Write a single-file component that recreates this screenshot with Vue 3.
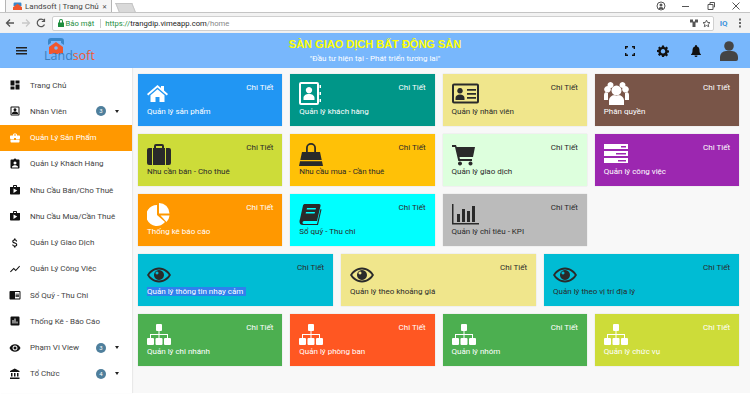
<template>
  <div class="page">
    <div class="tabstrip">
      <div class="tab">
        <svg class="favicon" viewBox="0 0 16 16"><path fill="#3a86c8" d="M3 1h10a2 2 0 0 1 2 2v4H1V3a2 2 0 0 1 2-2z" /><path fill="#f0562c" d="M8 3 0 9.5V14h16V9.5z" /></svg>
        <span class="tab-title">Landsoft | Trang Chủ</span>
        <span class="tab-close">✕</span>
      </div>
      <div class="newtab"></div>
      <div class="win-btns">
        <svg width="10" height="10" viewBox="0 0 10 10"><circle cx="5" cy="5" r="4" fill="none" stroke="#555" /><circle cx="5" cy="4" r="1.5" fill="#555" /><path d="M2.5 8a2.5 2 0 0 1 5 0z" fill="#555" /></svg>
        <svg width="10" height="10" viewBox="0 0 10 10"><path d="M1 5.5h7" stroke="#555" /></svg>
        <svg width="10" height="10" viewBox="0 0 10 10"><path d="M2 3.5h5v5H2zM4 3V1.5h4.500V6H7.500" fill="none" stroke="#555" /></svg>
        <svg width="10" height="10" viewBox="0 0 10 10"><path d="M1.5 1.5l7 7m0-7l-7 7" stroke="#555" /></svg>
      </div>
    </div>

    <div class="toolbar">
      <svg width="10" height="10" viewBox="0 0 10 10"><path d="M9 5H2m3-3.5L1.5 5 5 8.5" fill="none" stroke="#555" stroke-width="1.3" /></svg>
      <svg width="10" height="10" viewBox="0 0 10 10"><path d="M1 5h7M5 1.500 8.500 5 5 8.500" fill="none" stroke="#c8c8c8" stroke-width="1.3" /></svg>
      <svg width="10" height="10" viewBox="0 0 10 10"><path d="M8.500 6.500A3.800 3.800 0 1 1 8 2.500M8.500 .8v2.700H5.800" fill="none" stroke="#555" stroke-width="1.2" /></svg>
      <div class="omnibox">
        <svg class="lock" width="6" height="8" viewBox="0 0 6 8"><path fill="#1e8e3e" d="M0 3.500h6V8H0zM1 3.500V2a2 2 0 0 1 4 0v1.500H4V2a1 1 0 0 0-2 0v1.500z" /></svg>
        <span class="secure">Bảo mật</span>
        <span class="url"><span class="secure">https://</span>trangdip.vimeapp.com<span class="url-path">/home</span></span>
        <svg width="8" height="9" viewBox="0 0 8 9"><path fill="#555" d="M0 .5h3v2h2v-2h3v3H5.500V8h-3V3.500H0z" /></svg>
        <svg width="9" height="9" viewBox="0 0 24 24"><path fill="none" stroke="#555" stroke-width="2.5" d="M12 3l2.800 6 6.500.7-4.800 4.400 1.300 6.400L12 17.300l-5.800 3.200 1.300-6.400-4.800-4.400L9.200 9z" /></svg>
      </div>
      <span class="iq">IQ</span>
      <svg width="4" height="10" viewBox="0 0 4 10"><path fill="#666" d="M1 .5h2v2H1zM1 4h2v2H1zM1 7.500h2v2H1z" /></svg>
    </div>

    <header class="topbar">
      <div class="top-left">
        <svg width="11" height="8" viewBox="0 0 11 8"><path fill="#222" d="M0 0h11v1.500H0zM0 3h11v1.500H0zM0 6h11v1.500H0z" /></svg>
        <div class="logo">
          <svg class="logo-mark" width="16" height="16" viewBox="0 0 16 16">
            <path fill="#3a86c8" d="M3 0h10a3 3 0 0 1 3 3v4l-3-2V3H3v2L0 7V3a3 3 0 0 1 3-3z" />
            <path fill="#f0562c" d="M8 4 15 9v7H1V9z" />
            <circle cx="8" cy="10" r="1.8" fill="#78b7fc" />
          </svg>
          <span class="logo-text"><span class="land">Land</span><span class="soft">soft</span></span>
        </div>
      </div>
      <div class="brand">
        <div class="brand-title">SÀN GIAO DỊCH BẤT ĐỘNG SẢN</div>
        <div class="brand-sub">"Đầu tư hiện tại - Phát triển tương lai"</div>
      </div>
      <div class="top-actions">
        <svg width="10" height="10" viewBox="0 0 10 10"><path fill="none" stroke="#111" stroke-width="1.4" d="M.7 3V.7H3M7 .7h2.300V3M9.300 7v2.300H7M3 9.300H.7V7" /></svg>
        <svg width="12" height="12" viewBox="0 0 24 24"><path fill="#111" fill-rule="evenodd" d="M10 1h4l.6 3.200 1.900.8L19.200 3.200l2.800 2.800-1.800 2.700.8 1.900L24 11v4l-3 .6-.8 1.900 1.800 2.700-2.800 2.800-2.700-1.800-1.900.8L14 24h-4l-.6-3-1.900-.8-2.700 1.800L2 19.200l1.800-2.700-.8-1.900L0 14v-4l3-.6.8-1.900L2 6l2.800-2.800L7.500 5l1.900-.8zM12 8a4.500 4.500 0 1 0 .01 0z" /></svg>
        <svg width="10" height="12" viewBox="0 0 10 12"><path fill="#111" d="M5 0a1 1 0 0 1 1 1v.5C8 2 8.500 3.800 8.500 5.500c0 2 .5 3 1.500 4V10H0v-.5c1-1 1.500-2 1.500-4C1.500 3.800 2 2 4 1.500V1a1 1 0 0 1 1-1zM3.500 10.500h3a1.500 1.500 0 0 1-3 0z" /></svg>
        <svg class="avatar" width="18" height="20" viewBox="0 0 18 20"><circle cx="9" cy="5" r="4.8" fill="#444" /><path fill="#444" d="M0 20v-4a6 6 0 0 1 6-6h6a6 6 0 0 1 6 6v2a2 2 0 0 1-2 2z" /></svg>
      </div>
    </header>

    <div class="body">
      <aside class="sidebar">
        <div v-for="item in menu" :key="item.label" class="menu-item" :class="{ active: item.active }">
          <svg class="menu-icon" width="12" height="12" viewBox="0 0 24 24"><path :d="item.icon" fill-rule="evenodd" /></svg>
          <span class="menu-label">{{ item.label }}</span>
          <span v-if="item.badge" class="badge">{{ item.badge }}</span>
          <span v-if="item.badge" class="caret"></span>
        </div>
      </aside>

      <main class="board">
        <div v-for="card in cards" :key="card.label" class="card" :class="[card.wide ? 'wide' : '', card.dark ? 'dark' : '']" :style="{ background: card.color }">
          <svg class="card-icon" width="28" height="24" viewBox="0 0 28 24">
            <path v-for="d in icons[card.icon]" :key="d" :d="d" fill-rule="evenodd" />
          </svg>
          <span class="more">Chi Tiết</span>
          <span class="card-label"><span :class="{ picked: card.picked }">{{ card.label }}</span></span>
        </div>
      </main>
    </div>
  </div>
</template>

<script setup>
const shop = 'M16 6V4c0-1.100-.9-2-2-2h-4C8.900 2 8 2.900 8 4v2H2v13c0 1.100.9 2 2 2h16c1.100 0 2-.9 2-2V6zM10 4h4v2h-4zM9 18V9l7.500 4z'

const menu = [
  { label: 'Trang Chủ', icon: 'M3 3h8v10H3zM3 15h8v6H3zM13 3h8v6h-8zM13 11h8v10h-8z' },
  { label: 'Nhân Viên', badge: 3, icon: 'M5 3h14a2 2 0 0 1 2 2v14a2 2 0 0 1-2 2H5a2 2 0 0 1-2-2V5a2 2 0 0 1 2-2zM5 5v14h14V5zM12 6.500a3 3 0 1 1-.01 0zM6 18v-1.500c0-2.500 4-3.600 6-3.600s6 1.100 6 3.600V18z' },
  { label: 'Quản Lý Sản Phẩm', active: true, icon: 'M10 16v-1H3v4c0 1.100.9 2 2 2h14c1.100 0 2-.9 2-2v-4h-7v1zM20 7h-4V5l-2-2h-4L8 5v2H4C2.900 7 2 7.900 2 9v3c0 1.100.9 2 2 2h6v-2h4v2h6c1.100 0 2-.9 2-2V9c0-1.100-.9-2-2-2zM14 7h-4V5h4z' },
  { label: 'Quản Lý Khách Hàng', icon: 'M19 3h-4.200C14.400 1.800 13.300 1 12 1s-2.400.8-2.800 2H5C3.900 3 3 3.900 3 5v14c0 1.100.9 2 2 2h14c1.100 0 2-.9 2-2V5c0-1.100-.9-2-2-2zM12 7a3 3 0 1 1-.01 0zM18 19H6v-1.400c0-2 4-3.100 6-3.100s6 1.100 6 3.100z' },
  { label: 'Nhu Cầu Bán/Cho Thuê', icon: shop },
  { label: 'Nhu Cầu Mua/Cần Thuê', icon: shop },
  { label: 'Quản Lý Giao Dịch', icon: 'M11.800 10.900c-2.300-.6-3-1.200-3-2.200 0-1.100 1-1.800 2.700-1.800 1.800 0 2.400.8 2.500 2.100h2.200c-.1-1.700-1.100-3.300-3.200-3.800V3h-3v2.200c-1.900.4-3.500 1.700-3.500 3.600 0 2.300 1.900 3.500 4.700 4.100 2.500.6 3 1.500 3 2.400 0 .7-.5 1.800-2.700 1.800-2.100 0-2.900-.9-3-2.100H6.300c.1 2.200 1.800 3.400 3.700 3.800V21h3v-2.200c1.900-.4 3.500-1.500 3.500-3.500 0-2.800-2.400-3.800-4.700-4.400z' },
  { label: 'Quản Lý Công Việc', icon: 'M3.500 18.500l6-6 4 4L22 6.900l-1.400-1.400-7.100 8-4-4L2 17z' },
  { label: 'Sổ Quỹ - Thu Chi', icon: 'M3 4h18c1.100 0 2 .9 2 2v13c0 1.100-.9 2-2 2H3c-1.100 0-2-.9-2-2V6c0-1.100.9-2 2-2zM12 6v13h9V6zM13 9.500h7V11h-7zM13 12h7v1.500h-7zM13 14.500h7V16h-7z' },
  { label: 'Thống Kê - Báo Cáo', icon: 'M5 3h14a2 2 0 0 1 2 2v14a2 2 0 0 1-2 2H5a2 2 0 0 1-2-2V5a2 2 0 0 1 2-2zM7 10v7h2v-7zM11 7v10h2V7zM15 13v4h2v-4z' },
  { label: 'Phạm Vi View', badge: 3, icon: 'M12 4.500C7 4.500 2.700 7.600 1 12c1.700 4.400 6 7.500 11 7.500s9.300-3.100 11-7.500c-1.700-4.400-6-7.500-11-7.500zM12 7a5 5 0 1 1-.01 0zM12 9a3 3 0 1 0 .01 0z' },
  { label: 'Tổ Chức', badge: 4, icon: 'M4 10h3v7H4zM10 10h3v7h-3zM2 19h19v3H2zM16 10h3v7h-3zM11.500 1 21 6v2H2V6z' },
]

const icons = {
  home: ['M10.500 3 0 12l1.200 1.400L10.500 5.500l9.300 7.900L21 12l-4-3.400V4h-3v2z', 'M10.500 7.300 3.500 13.200V20h5v-5h4v5h5v-6.800z'],
  book: ['M2 0h16a2 2 0 0 1 2 2v19a2 2 0 0 1-2 2H2a2 2 0 0 1-2-2V2a2 2 0 0 1 2-2zM2 2v19h16V2z', 'M10 5a3.200 3.200 0 1 1-.01 0zM4.500 18v-2c0-2.500 2.500-4 5.500-4s5.500 1.500 5.500 4v2z', 'M20.500 3H22v3h-1.500zM20.500 10H22v3h-1.500zM20.500 17H22v3h-1.500z'],
  idcard: ['M2 1.500h23a2 2 0 0 1 2 2v16a2 2 0 0 1-2 2H2a2 2 0 0 1-2-2v-16a2 2 0 0 1 2-2zM2 3.500v16h23v-16z', 'M8 6a2.800 2.800 0 1 1-.01 0zM3.500 18v-2c0-2 2-3.500 4.500-3.500s4.500 1.500 4.500 3.500v2z', 'M15 7h9v1.800h-9zM15 11h9v1.800h-9zM15 15h9v1.800h-9z'],
  users: ['M6.500 0a3 3 0 1 1-.01 0zM18.500 0a3 3 0 1 1-.01 0z', 'M3.500 4a3.300 3.300 0 1 1-.01 0zM21.500 4a3.300 3.300 0 1 1-.01 0zM0 18v-5a3 3 0 0 1 3-3h1v8zM21 10h1a3 3 0 0 1 3 3v5h-4z', 'M12.500 3.500a5 5 0 1 1-.01 0zM5 23v-5a6 5.500 0 0 1 6-5h3a6 5.500 0 0 1 6 5v5z'],
  suitcase: ['M9 2h6a2 2 0 0 1 2 2v2h-2V4H9v2H7V4a2 2 0 0 1 2-2z', 'M2 6h3v17H2a2 2 0 0 1-2-2V8a2 2 0 0 1 2-2zM6 6h12v17H6zM19 6h3a2 2 0 0 1 2 2v13a2 2 0 0 1-2 2h-3z'],
  bag: ['M3 10h18l1.700 8H1.300zM1 19.300h22L24 24H0z', 'M7 10V6a5 5 0 0 1 10 0v4h-1.800V6a3.200 3.200 0 0 0-6.400 0v4z'],
  cart: ['M0 3h4l.7 2H23l-2 10H7.500l.4 2H20v2H6.300L3 5H0z', 'M8 19.500a2 2 0 1 1-.01 0zM18.500 19.500a2 2 0 1 1-.01 0z'],
  tasks: ['M0 2h24v5H0zM17 4h5v1.500h-5z', 'M0 9h24v5H0zM12 11h10v1.500H12z', 'M0 16h24v5H0zM14 18h8v1.500h-8z'],
  pie: ['M10 3v10l8 7A10.500 10.500 0 1 1 10 3z', 'M12 1a10.500 10.500 0 0 1 10.500 10.500H12z', 'M13.500 13.500h9a10.500 10.500 0 0 1-3 6.500z'],
  ledger: ['M6 2h14a1.500 1.500 0 0 1 1.500 2L18 19H5a1.500 1.500 0 0 0 0 3h13l3.500-15 1 .5L19 23H4a3.500 3.500 0 0 1-3.500-3.500c0-1 .2-1.500.5-2.500L4 3.500C4.300 2.500 5 2 6 2zM8 6l-.4 1.500h9L17 6zM7 10l-.4 1.500h9l.4-1.500z'],
  chart: ['M0 2h1.500v19H27v1.500H0z', 'M5 12h3v8H5zM10 7h3v13h-3zM15 9h3v11h-3zM20 4h3v16h-3z'],
  eye: ['M12 5.500C6 5.500 2 9.500 0 13c2 3.500 6 7.500 12 7.500s10-4 12-7.500c-2-3.500-6-7.500-12-7.500zM12 7.500C7.500 7.500 4 10.500 2.200 13c1.800 2.500 5.300 5.500 9.800 5.500s8-3 9.800-5.500C20 10.500 16.500 7.500 12 7.500z', 'M12 8a5 5 0 1 1-.01 0zM10 9.500a1.500 1.500 0 1 0 .01 0z'],
  sitemap: ['M10 2h4a1 1 0 0 1 1 1v5a1 1 0 0 1-1 1h-4a1 1 0 0 1-1-1V3a1 1 0 0 1 1-1z', 'M3 12h8.500V9h1v3H21v4h-1v-3h-7.500v3h-1v-3H4v3H3z', 'M1 16h5a1 1 0 0 1 1 1v5a1 1 0 0 1-1 1H1a1 1 0 0 1-1-1v-5a1 1 0 0 1 1-1zM9.500 16h5a1 1 0 0 1 1 1v5a1 1 0 0 1-1 1h-5a1 1 0 0 1-1-1v-5a1 1 0 0 1 1-1zM18 16h5a1 1 0 0 1 1 1v5a1 1 0 0 1-1 1h-5a1 1 0 0 1-1-1v-5a1 1 0 0 1 1-1z'],
}

const cards = [
  { label: 'Quản lý sản phẩm', icon: 'home', color: '#2196f3' },
  { label: 'Quản lý khách hàng', icon: 'book', color: '#009688' },
  { label: 'Quản lý nhân viên', icon: 'idcard', color: '#f0e68c', dark: true },
  { label: 'Phân quyền', icon: 'users', color: '#795548' },
  { label: 'Nhu cần bán - Cho thuê', icon: 'suitcase', color: '#cddc39', dark: true },
  { label: 'Nhu cầu mua - Cần thuê', icon: 'bag', color: '#ffc107', dark: true },
  { label: 'Quản lý giao dịch', icon: 'cart', color: '#ddffdd', dark: true },
  { label: 'Quản lý công việc', icon: 'tasks', color: '#9c27b0' },
  { label: 'Thống kê báo cáo', icon: 'pie', color: '#ff9800' },
  { label: 'Sổ quỹ - Thu chi', icon: 'ledger', color: '#00ffff', dark: true },
  { label: 'Quản lý chỉ tiêu - KPI', icon: 'chart', color: '#bbbbbb', dark: true },
  { label: 'Quản lý thông tin nhạy cảm', icon: 'eye', color: '#00bcd4', dark: true, wide: true, picked: true },
  { label: 'Quản lý theo khoảng giá', icon: 'eye', color: '#f0e68c', dark: true, wide: true },
  { label: 'Quản lý theo vị trí địa lý', icon: 'eye', color: '#00bcd4', dark: true, wide: true },
  { label: 'Quản lý chi nhánh', icon: 'sitemap', color: '#4caf50' },
  { label: 'Quản lý phòng ban', icon: 'sitemap', color: '#ff5722' },
  { label: 'Quản lý nhóm', icon: 'sitemap', color: '#4caf50' },
  { label: 'Quản lý chức vụ', icon: 'sitemap', color: '#cddc39' },
]
</script>

<style scoped>
.page {
  width: 750px;
  height: 416px;
  overflow: hidden;
  background: #fff;
  font-family: Roboto, "Liberation Sans", sans-serif;
  color: #333;
}

.tabstrip {
  height: 12px;
  display: flex;
  align-items: flex-end;
  padding-left: 5px;
  border-bottom: 1px solid #c4c4c4;
}

.tab {
  width: 107px;
  height: 12px;
  display: flex;
  align-items: center;
  gap: 3px;
  padding: 0 6px 0 7px;
  box-sizing: border-box;
  background: #f5f5f5;
  border-left: 1px solid #b5b5b5;
  border-right: 1px solid #b5b5b5;
  font-size: 8px;
  color: #444;
}

.favicon {
  width: 9px;
  height: 9px;
  flex: none;
}

.tab-title {
  flex: 1;
  white-space: nowrap;
}

.tab-close {
  font-size: 6px;
}

.newtab {
  width: 15px;
  height: 8px;
  margin-left: 5px;
  background: #d9d9d9;
  border: 1px solid #c4c4c4;
  border-bottom: 0;
  transform: skewX(22deg);
}

.win-btns {
  margin-left: auto;
  height: 12px;
  display: flex;
  align-items: center;
  gap: 15px;
  padding-right: 9px;
}

.toolbar {
  height: 20px;
  display: flex;
  align-items: center;
  gap: 5.5px;
  padding: 0 8px 0 5px;
  box-sizing: border-box;
  background: #f2f2f2;
}

.omnibox {
  flex: 1;
  height: 15px;
  display: flex;
  align-items: center;
  gap: 4px;
  margin-right: 0.5px;
  padding: 0 2px 0 5px;
  box-sizing: border-box;
  background: #fff;
  border: 1px solid #d0d0d0;
  border-radius: 2px;
  font-size: 7.7px;
}

.lock {
  margin-right: -2px;
}

.secure {
  color: #1e8e3e;
}

.url {
  flex: 1;
  margin-left: 2px;
  padding-left: 4px;
  border-left: 1px solid #ccc;
  color: #222;
}

.url-path {
  color: #888;
}

.iq {
  font-size: 8px;
  font-weight: 700;
  color: #3b93dc;
  margin: 0 5px 0 0;
}

.topbar {
  height: 35px;
  display: grid;
  grid-template-columns: 1fr auto 1fr;
  align-items: center;
  background: #78b7fc;
  box-shadow: 0 1px 2px rgba(0, 0, 0, 0.15);
}

.top-left {
  display: flex;
  align-items: center;
  padding-left: 16px;
}

.logo {
  display: flex;
  flex-direction: column;
  margin-left: 17px;
}

.logo-mark {
  margin-left: 4px;
}

.logo-text {
  margin-top: -5px;
  font-family: "Open Sans", sans-serif;
  font-size: 12.5px;
  line-height: 14px;
  white-space: nowrap;
}

.land {
  color: #3a7fc0;
}

.soft {
  color: #ef5a33;
}

.brand {
  text-align: center;
}

.brand-title {
  font-family: "Liberation Sans", sans-serif;
  font-weight: 700;
  font-size: 11px;
  line-height: 14px;
  color: #ffff00;
}

.brand-sub {
  font-size: 8px;
  line-height: 12px;
  margin-top: 2px;
  color: #fff;
}

.top-actions {
  display: flex;
  align-items: center;
  justify-content: flex-end;
  gap: 22px;
  padding-right: 12px;
}

.avatar {
  margin-left: -3px;
}

.body {
  height: 325px;
  display: flex;
  background: #f8f8f8;
}

.sidebar {
  width: 132px;
  flex: none;
  padding-top: 4px;
  box-sizing: border-box;
  background: #fff;
  box-shadow: 1px 0 1px rgba(0, 0, 0, 0.06);
}

.menu-item {
  height: 26.25px;
  display: flex;
  align-items: center;
  padding: 0 9px;
  box-sizing: border-box;
  font-size: 8px;
  color: #444;
}

.menu-item.active {
  background: #ff9800;
  color: #fff;
}

.menu-icon {
  width: 12px;
  height: 12px;
  flex: none;
  fill: #111;
}

.active .menu-icon {
  fill: #fff;
}

.menu-label {
  flex: 1;
  margin-left: 9px;
  white-space: nowrap;
}

.badge {
  width: 10px;
  height: 10px;
  border-radius: 50%;
  background: #4f7f9c;
  color: #fff;
  font-size: 6px;
  line-height: 10px;
  text-align: center;
}

.caret {
  width: 0;
  height: 0;
  margin-left: 9px;
  margin-right: 4px;
  border-left: 2.5px solid transparent;
  border-right: 2.5px solid transparent;
  border-top: 3px solid #222;
}

.board {
  flex: 1;
  display: grid;
  grid-template-columns: repeat(12, 1fr);
  grid-auto-rows: 52px;
  gap: 8px;
  align-content: start;
  padding: 6px 11px 0 6px;
  box-sizing: border-box;
}

.card {
  grid-column: span 3;
  display: grid;
  grid-template-columns: 1fr auto;
  grid-template-rows: 24px auto;
  padding: 8px 9px 0;
  box-sizing: border-box;
  color: #fff;
  font-size: 8px;
  box-shadow: 0 0 1px rgba(0, 0, 0, 0.2);
}

.card.wide {
  grid-column: span 4;
}

.card.dark {
  color: #2a2a2a;
}

.card-icon {
  fill: currentColor;
}

.more {
  line-height: 12px;
}

.card-label {
  grid-column: 1 / -1;
  line-height: 11px;
  white-space: nowrap;
}

.picked {
  padding-right: 3px;
  background: #2f80ed;
  color: #fff;
}
</style>

<style>
body {
  margin: 0;
}
</style>
